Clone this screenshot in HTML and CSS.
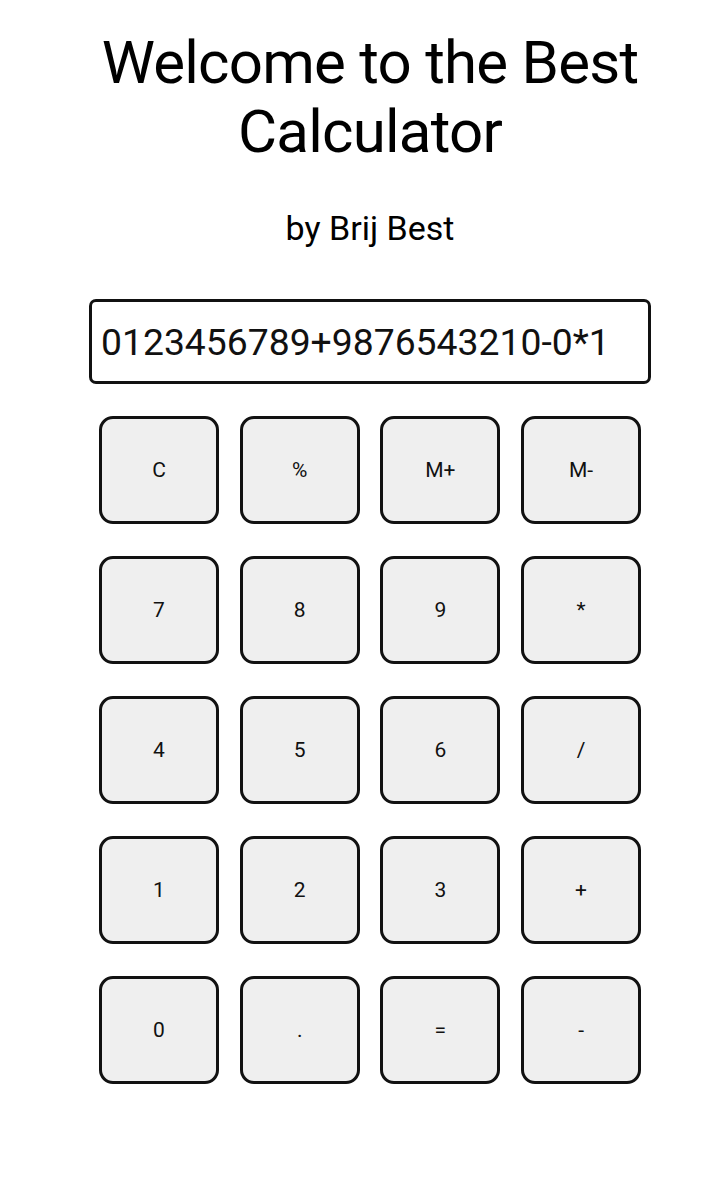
FILE: index.html
```html
<!DOCTYPE html>
<html lang="en">
<head>
    <meta charset="UTF-8">
    <meta name="viewport" content="width=device-width, initial-scale=1.0">
    <title>Best Calculator</title>
    <link rel="stylesheet" href="styles.css">
</head>
<body>
    <main class="calculator">
        <h1>Welcome to the Best Calculator</h1>
        <p class="author">by Brij Best</p>

        <input type="text" class="display" id="display" value="0123456789+9876543210-0*1">

        <div class="keys">
            <button>C</button>
            <button>%</button>
            <button>M+</button>
            <button>M-</button>
            <button>7</button>
            <button>8</button>
            <button>9</button>
            <button>*</button>
            <button>4</button>
            <button>5</button>
            <button>6</button>
            <button>/</button>
            <button>1</button>
            <button>2</button>
            <button>3</button>
            <button>+</button>
            <button>0</button>
            <button>.</button>
            <button>=</button>
            <button>-</button>
        </div>
    </main>
</body>
</html>
```

FILE: styles.css
```css
/* General Styles */
* {
    box-sizing: border-box;
    margin: 0;
    padding: 0;
}

body {
    font-family: Roboto, 'Noto Sans', sans-serif;
    background-color: #ffffff;
    color: #000000;
    padding-left: 14px;
}

.calculator {
    display: flex;
    flex-direction: column;
    align-items: center;
    padding-top: 28px;
}

/* Heading */
h1 {
    font-size: 60px;
    font-weight: 400;
    line-height: 69px;
    letter-spacing: -0.75px;
    text-align: center;
    width: 560px;
}

.author {
    font-size: 34px;
    margin-top: 42px;
    line-height: 40px;
}

/* Display */
.display {
    width: 562px;
    height: 85px;
    margin-top: 51px;
    border: 3px solid #111;
    border-radius: 7px;
    padding: 0 9px;
    font-family: Roboto, sans-serif;
    font-size: 37.3px;
    color: #111;
    outline: none;
}

/* Keys */
.keys {
    display: grid;
    grid-template-columns: repeat(4, 120px);
    grid-auto-rows: 108px;
    column-gap: 20.7px;
    row-gap: 32px;
    margin-top: 32px;
}

.keys button {
    background-color: #efefef;
    border: 3px solid #111;
    border-radius: 14px;
    font-family: Roboto, sans-serif;
    font-size: 21px;
    color: #111;
    cursor: pointer;
}
```
